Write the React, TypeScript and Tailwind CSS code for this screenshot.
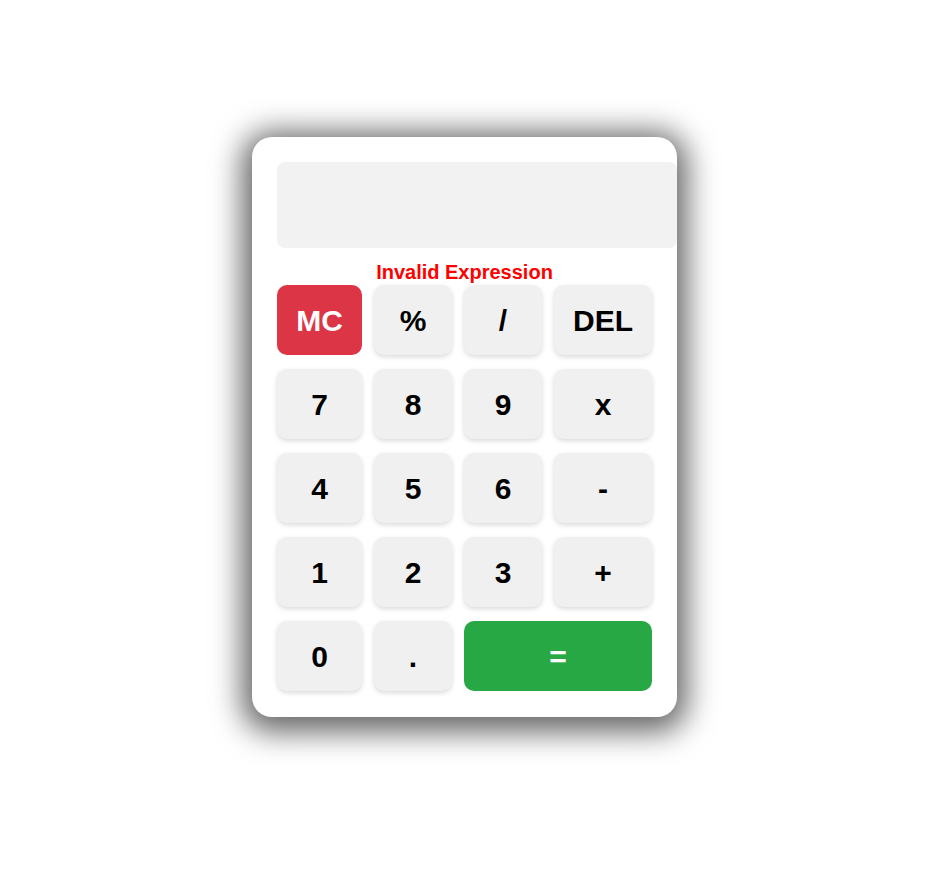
import React from 'react';

type Key = {
    label: string;
    kind?: 'clear' | 'equals';
};

const keys: Key[] = [
    { label: 'MC', kind: 'clear' },
    { label: '%' },
    { label: '/' },
    { label: 'DEL' },
    { label: '7' },
    { label: '8' },
    { label: '9' },
    { label: 'x' },
    { label: '4' },
    { label: '5' },
    { label: '6' },
    { label: '-' },
    { label: '1' },
    { label: '2' },
    { label: '3' },
    { label: '+' },
    { label: '0' },
    { label: '.' },
    { label: '=', kind: 'equals' },
];

const keyClass = (kind?: Key['kind']) => {
    if (kind === 'clear') return 'bg-[#dc3545] text-white';
    if (kind === 'equals') return 'col-span-2 bg-[#28a745] text-white';
    return 'bg-[#f0f0f0] text-black shadow-[0_2px_5px_rgba(0,0,0,0.15)]';
};

export default function App() {
    return (
        <div className="min-h-screen bg-white flex justify-center pt-[137px] pl-[3px] font-['Liberation_Sans',Arial,sans-serif]">
            <div className="w-[425px] h-[580px] bg-white rounded-[20px] p-[25px] shadow-[0_5px_30px_10px_rgba(0,0,0,0.6)]">
                {/* Display */}
                <div className="w-[400px] h-[86px] bg-[#f2f2f2] rounded-lg"></div>

                <p className="mt-[13px] mb-[1px] text-center text-[20px] leading-[23px] font-bold text-[#ff0000]">
                    Invalid Expression
                </p>

                {/* Keypad */}
                <div className="grid grid-cols-[85px_78px_78px_98px] gap-x-3 gap-y-[14px]">
                    {keys.map((k) => (
                        <button
                            key={k.label}
                            className={`h-[70px] rounded-[10px] text-[30px] font-bold flex items-center justify-center ${keyClass(k.kind)}`}
                        >
                            {k.label}
                        </button>
                    ))}
                </div>
            </div>
        </div>
    );
}
